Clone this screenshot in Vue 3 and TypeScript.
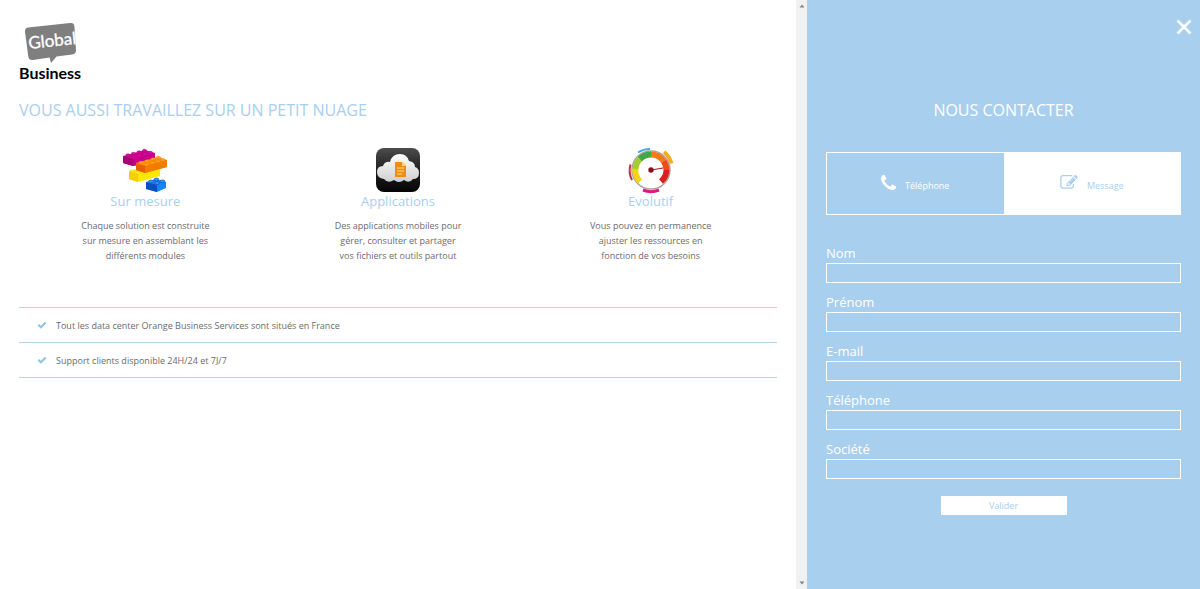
<script setup lang="ts">
import { reactive, ref } from 'vue'

interface Feature {
  id: 'bricks' | 'cloud' | 'gauge'
  title: string
  lines: string[]
}

interface Field {
  id: 'nom' | 'prenom' | 'email' | 'telephone' | 'societe'
  label: string
  type: string
}

const features: Feature[] = [
  {
    id: 'bricks',
    title: 'Sur mesure',
    lines: ['Chaque solution est construite', 'sur mesure en assemblant les', 'différents modules'],
  },
  {
    id: 'cloud',
    title: 'Applications',
    lines: ['Des applications mobiles pour', 'gérer, consulter et partager', 'vos fichiers et outils partout'],
  },
  {
    id: 'gauge',
    title: 'Evolutif',
    lines: ['Vous pouvez en permanence', 'ajuster les ressources en', 'fonction de vos besoins'],
  },
]

const perks: string[] = [
  'Tout les data center Orange Business Services sont situés en France',
  'Support clients disponible 24H/24 et 7J/7',
]

const fields: Field[] = [
  { id: 'nom', label: 'Nom', type: 'text' },
  { id: 'prenom', label: 'Prénom', type: 'text' },
  { id: 'email', label: 'E-mail', type: 'email' },
  { id: 'telephone', label: 'Téléphone', type: 'tel' },
  { id: 'societe', label: 'Société', type: 'text' },
]

const mode = ref<'phone' | 'message'>('message')
const form = reactive<Record<Field['id'], string>>({
  nom: '',
  prenom: '',
  email: '',
  telephone: '',
  societe: '',
})
</script>

<template>
  <div class="page">
    <main class="content">
      <svg class="logo" viewBox="0 0 64 64" role="img" aria-label="Global Business">
        <path
          d="M9 5.500L51 1Q55 .5 55.400 4L57 28Q57 32 53 32.500L37.500 34.500L32 41L30.500 35.500L14 38Q10 38.500 9.300 34.500L6 10Q5.500 6 9 5.500Z"
          fill="#7f7f7f"
        />
        <text class="logo-top" x="10" y="27" transform="rotate(-6 10 27)">Global</text>
        <text class="logo-bottom" x="0" y="57">Business</text>
      </svg>

      <h1 class="headline">VOUS AUSSI TRAVAILLEZ SUR UN PETIT NUAGE</h1>

      <section class="features">
        <article v-for="feature in features" :key="feature.id" class="feature">
          <svg v-if="feature.id === 'bricks'" class="feature-icon" viewBox="0 0 44 44" aria-hidden="true">
            <path d="M0 8L22 2L32 5V13L10 18L0 15Z" fill="#d4008f" />
            <path d="M0 8L10 11V18L0 15Z" fill="#a50078" />
            <path d="M10 11L32 5V13L10 18Z" fill="#c5008a" />
            <g fill="#d80f96" stroke="#a80078" stroke-width=".4">
              <ellipse cx="5" cy="7" rx="2.200" ry="1.300" /><ellipse cx="10.500" cy="5.500" rx="2.200" ry="1.300" />
              <ellipse cx="16" cy="4" rx="2.200" ry="1.300" /><ellipse cx="21.500" cy="2.500" rx="2.200" ry="1.300" />
              <ellipse cx="11" cy="9" rx="2.200" ry="1.300" /><ellipse cx="16.500" cy="7.500" rx="2.200" ry="1.300" />
              <ellipse cx="22" cy="6" rx="2.200" ry="1.300" /><ellipse cx="27.500" cy="4.600" rx="2.200" ry="1.300" />
            </g>
            <path d="M6 23L28 18L37 21V28L15 34L6 31Z" fill="#ffe800" />
            <path d="M6 23L15 26V34L6 31Z" fill="#f7cf00" />
            <g fill="#fff34a" stroke="#e3c200" stroke-width=".5">
              <ellipse cx="9.500" cy="23" rx="2" ry="1.200" /><ellipse cx="15" cy="24.500" rx="2" ry="1.200" />
            </g>
            <path d="M13 15L35 9L44 12V19L22 25L13 22Z" fill="#ff9100" />
            <path d="M13 15L22 18V25L13 22Z" fill="#e85f00" />
            <path d="M22 18L44 12V19L22 25Z" fill="#f47b00" />
            <g fill="#ffa32b" stroke="#e57200" stroke-width=".4">
              <ellipse cx="18" cy="14.500" rx="2.200" ry="1.300" /><ellipse cx="24" cy="13" rx="2.200" ry="1.300" />
              <ellipse cx="30" cy="11" rx="2.200" ry="1.300" /><ellipse cx="35.500" cy="9.500" rx="2.200" ry="1.300" />
              <ellipse cx="23.500" cy="16.500" rx="2.200" ry="1.300" /><ellipse cx="29.500" cy="14.800" rx="2.200" ry="1.300" />
              <ellipse cx="35" cy="13.300" rx="2.200" ry="1.300" /><ellipse cx="40" cy="12" rx="2.200" ry="1.300" />
            </g>
            <path d="M23 34L33 31L43 34V40L34 44L23 41Z" fill="#1c83ee" />
            <path d="M23 34L34 37V44L23 41Z" fill="#0750bd" />
            <g fill="#2f9bff" stroke="#0646a8" stroke-width=".6">
              <ellipse cx="28" cy="33.500" rx="2.400" ry="1.400" /><ellipse cx="33.500" cy="31.500" rx="2.400" ry="1.400" />
              <ellipse cx="34" cy="35" rx="2.400" ry="1.400" /><ellipse cx="39.500" cy="33.300" rx="2.400" ry="1.400" />
            </g>
          </svg>

          <svg v-else-if="feature.id === 'cloud'" class="feature-icon" viewBox="0 0 44 44" aria-hidden="true">
            <defs>
              <linearGradient id="tile" x1="0" y1="0" x2="0" y2="1">
                <stop offset="0" stop-color="#4c4c4c" /><stop offset=".5" stop-color="#202020" />
                <stop offset="1" stop-color="#050505" />
              </linearGradient>
              <linearGradient id="cloud" x1="0" y1="0" x2="0" y2="1">
                <stop offset="0" stop-color="#fff" /><stop offset="1" stop-color="#cfcfcf" />
              </linearGradient>
            </defs>
            <rect width="44" height="44" rx="8" fill="url(#tile)" />
            <path
              d="M8 31Q1 30 1 24Q1 18 7 18Q9 13 14 14Q16 6 24 6Q31 6 33 13Q39 14 39 19Q43 20 43 25Q43 31 37 31Q33 36 28 32Q23 36 18 32Q12 36 8 31Z"
              fill="url(#cloud)"
            />
            <path d="M19 14H26L30 18V29H19Z" fill="#f58b0a" />
            <path d="M26 14L30 18H26Z" fill="#ffd08a" />
            <path d="M21 20H28M21 23H28M21 26H26" stroke="#ffd79c" stroke-width="1" />
          </svg>

          <svg v-else class="feature-icon" viewBox="0 0 44 44" aria-hidden="true" fill="none">
            <circle cx="22" cy="22" r="19" fill="#fff" stroke="#a8a49f" stroke-width="1.500" />
            <path d="M11 33.500A15.500 15.500 0 0 1 6.500 20" stroke="#f5d21b" stroke-width="6" />
            <path d="M6.500 21A15.500 15.500 0 0 1 11.500 10.600" stroke="#a5cc2b" stroke-width="6" />
            <path d="M11 11A15.500 15.500 0 0 1 22 6.500" stroke="#43a843" stroke-width="6" />
            <path d="M22 6.500A15.500 15.500 0 0 1 34.500 13" stroke="#f47a18" stroke-width="6" />
            <path d="M34.500 13A15.500 15.500 0 0 1 37.500 22" stroke="#ee4b1c" stroke-width="6" />
            <path d="M37.500 22A15.500 15.500 0 0 1 32 33.500" stroke="#d92020" stroke-width="6" />
            <path d="M22 22L34 20" stroke="#a31625" stroke-width="1" />
            <circle cx="22" cy="22" r="2.700" fill="#8c1020" />
            <path d="M9 4.500A22 22 0 0 1 21 1" stroke="#4aa9dc" stroke-width="2" />
            <path d="M35 4A22 22 0 0 1 42.500 15.500" stroke="#f7a928" stroke-width="4" />
            <path d="M3 32A21 21 0 0 1 1.500 16.500" stroke="#c72c3f" stroke-width="2" />
            <path d="M14 42A21 21 0 0 0 30 42" stroke="#df1683" stroke-width="3" />
          </svg>

          <h2 class="feature-title">{{ feature.title }}</h2>
          <p class="feature-text">
            <span v-for="line in feature.lines" :key="line" class="line">{{ line }}</span>
          </p>
        </article>
      </section>

      <ul class="perks">
        <li v-for="perk in perks" :key="perk" class="perk">
          <svg class="check" viewBox="0 0 10 8" aria-hidden="true">
            <path d="M1.300 3.800L3.900 6.300L8.700 1.500" fill="none" stroke="#8ec3ea" stroke-width="2" />
          </svg>
          <span>{{ perk }}</span>
        </li>
      </ul>
    </main>

    <div class="scrollbar" aria-hidden="true">
      <svg class="arrow" viewBox="0 0 6 4"><path d="M.5 3.500L3 .5L5.500 3.500Z" /></svg>
      <svg class="arrow" viewBox="0 0 6 4"><path d="M.5 .5L3 3.500L5.500 .5Z" /></svg>
    </div>

    <aside class="panel">
      <button class="close" type="button" aria-label="Fermer">
        <svg viewBox="0 0 16 16" aria-hidden="true">
          <path d="M1.500 1.500L14.500 14.500M14.500 1.500L1.500 14.500" stroke="#fff" stroke-width="2.500" />
        </svg>
      </button>

      <h2 class="panel-title">NOUS CONTACTER</h2>

      <div class="modes">
        <button
          type="button"
          class="mode"
          :class="{ active: mode === 'phone' }"
          :aria-pressed="mode === 'phone'"
          @click="mode = 'phone'"
        >
          <svg class="mode-icon" viewBox="0 0 1408 1408" aria-hidden="true">
            <path
              fill="currentColor"
              d="M1408 1112q0 27-10 70.500t-21 68.500q-21 50-122 106-94 51-186 51-27 0-53-3.500t-57.500-12.500-47-14.500-55.500-20.500-49-18q-98-35-175-83-127-79-264-216t-216-264q-48-77-83-175-3-9-18-49t-20.500-55.500-14.500-47-12.500-57.500-3.500-53q0-92 51-186 56-101 106-122 25-11 68.500-21t70.500-10q14 0 21 3 18 6 53 76 11 19 30 54t35 63.500 31 53.500q3 4 17.500 25t21.500 35.500 7 28.500q0 20-28.500 50t-62 55-62 53-28.500 46q0 9 5 22.500t8.500 20.500 14 24 11.500 19q76 137 174 235t235 174q2 1 19 11.500t24 14 20.500 8.500 22.500 5q18 0 46-28.500t53-62 55-62 50-28.500q14 0 28.500 7t35.500 21.500 25 17.500q25 15 53.500 31t63.500 35 54 30q70 35 76 53 3 7 3 21z"
            />
          </svg>
          <span>Téléphone</span>
        </button>
        <button
          type="button"
          class="mode"
          :class="{ active: mode === 'message' }"
          :aria-pressed="mode === 'message'"
          @click="mode = 'message'"
        >
          <svg class="mode-icon wide" viewBox="0 0 1792 1536" aria-hidden="true">
            <path
              fill="currentColor"
              d="M888 1056l116-116-152-152-116 116v56h96v96h56zm440-720q-16-16-33 1l-350 350q-17 17-1 33t33-1l350-350q17-17 1-33zm80 594v190q0 119-84.500 203.500t-203.500 84.500h-832q-119 0-203.500-84.500t-84.500-203.500v-832q0-119 84.500-203.500t203.500-84.500h832q63 0 117 25 15 7 18 23 3 17-9 29l-49 49q-14 14-32 8-23-6-45-6h-832q-66 0-113 47t-47 113v832q0 66 47 113t113 47h832q66 0 113-47t47-113v-126q0-13 9-22l64-64q15-15 35-7t20 29zm-96-738l288 288-672 672h-288v-288zm444 132l-92 92-288-288 92-92q28-28 68-28t68 28l152 152q28 28 28 68t-28 68z"
            />
          </svg>
          <span>Message</span>
        </button>
      </div>

      <form class="form" @submit.prevent>
        <div v-for="field in fields" :key="field.id" class="field">
          <label class="label" :for="field.id">{{ field.label }}</label>
          <input :id="field.id" v-model="form[field.id]" class="input" :type="field.type" :name="field.id" />
        </div>
        <button class="submit" type="submit">Valider</button>
      </form>
    </aside>
  </div>
</template>

<style>
body {
  margin: 0;
}
</style>

<style scoped>
.page {
  display: flex;
  min-height: 100vh;
  background: #fff;
  color: #6b6b6b;
  font-family: 'Open Sans', 'Noto Sans', sans-serif;
  font-size: 9px;
  line-height: 15px;
}

.page *,
.page {
  box-sizing: border-box;
}

button,
input {
  font: inherit;
  margin: 0;
}

.content {
  flex: 1;
  min-width: 0;
  padding: 22px 19px;
}

.logo {
  display: block;
  width: 64px;
  height: 64px;
}

.logo-top {
  font-family: Lato, sans-serif;
  font-size: 17px;
  font-weight: 400;
  fill: #fff;
  stroke: #fff;
  stroke-width: 0.3;
}

.logo-bottom {
  font-family: Lato, sans-serif;
  font-size: 16px;
  font-weight: 700;
  fill: #000;
}

.headline {
  margin: 12px 0 0;
  font-size: 16px;
  font-weight: 400;
  line-height: 24px;
  color: #a9cfee;
}

.features {
  display: grid;
  grid-template-columns: repeat(3, 1fr);
  margin-top: 26px;
}

.feature {
  display: flex;
  flex-direction: column;
  align-items: center;
  text-align: center;
}

.feature-icon {
  width: 44px;
  height: 44px;
  overflow: visible;
}

.feature-title {
  margin: 0;
  font-size: 13px;
  font-weight: 400;
  line-height: 18px;
  color: #a9cfee;
}

.feature-text {
  margin: 8px 0 0;
}

.line {
  display: block;
}

.perks {
  margin: 44px 0 0;
  padding: 0;
  list-style: none;
  border-top: 1px solid #b9d5ea;
}

.perk {
  display: flex;
  align-items: center;
  gap: 9px;
  height: 35px;
  padding: 0 18px;
  border-bottom: 1px solid #b9d5ea;
}

.check {
  width: 10px;
  height: 8px;
}

.scrollbar {
  display: flex;
  flex-direction: column;
  align-items: center;
  justify-content: space-between;
  width: 11px;
  padding: 4px 0;
  background: #f1f1f1;
}

.arrow {
  width: 6px;
  height: 4px;
  fill: #858585;
}

.panel {
  position: relative;
  width: 32.75%;
  padding: 98px 19px 20px;
  background: #a9cfee;
  color: #fff;
}

.close {
  position: absolute;
  top: 19px;
  right: 8px;
  width: 16px;
  height: 16px;
  padding: 0;
  border: 0;
  background: none;
  cursor: pointer;
}

.close svg {
  display: block;
}

.panel-title {
  margin: 0;
  font-size: 16px;
  font-weight: 400;
  line-height: 24px;
  text-align: center;
}

.modes {
  display: grid;
  grid-template-columns: 1fr 1fr;
  margin-top: 30px;
  border: 1px solid #fff;
}

.mode {
  display: flex;
  align-items: center;
  justify-content: center;
  gap: 9px;
  height: 61px;
  padding: 0;
  border: 0;
  background: none;
  color: #fff;
  cursor: pointer;
}

.mode span {
  padding-top: 4px;
}

.mode.active {
  background: #fff;
  color: #a9cfee;
}

.mode-icon {
  width: 15px;
  height: 15px;
  margin-bottom: 2px;
}

.mode-icon.wide {
  width: 18px;
}

.form {
  display: flex;
  flex-direction: column;
  margin-top: 29px;
}

.field {
  display: flex;
  flex-direction: column;
  margin-bottom: 10px;
}

.label {
  font-size: 13px;
  line-height: 19px;
}

.input {
  width: 100%;
  height: 20px;
  padding: 0 4px;
  border: 1px solid #fff;
  border-radius: 0;
  background: transparent;
  color: #fff;
}

.submit {
  align-self: center;
  width: 126px;
  height: 19px;
  margin-top: 7px;
  padding: 0;
  border: 0;
  background: #fff;
  color: #a9cfee;
  line-height: 19px;
  cursor: pointer;
}
</style>
